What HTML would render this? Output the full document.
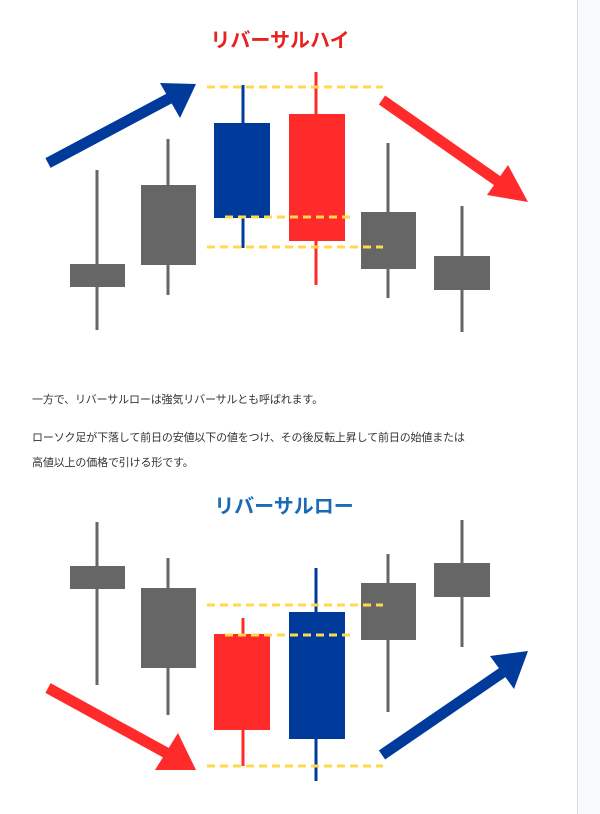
<!DOCTYPE html>
<html><head><meta charset="utf-8"><style>
body{margin:0;width:600px;height:814px;background:#fff;position:relative;overflow:hidden;font-family:"Liberation Sans","Noto Sans CJK JP",sans-serif}
.sb{position:absolute;left:577px;top:0;width:23px;height:814px;background:#f8f9fb;border-left:1px solid #ddd}
.t{position:absolute;left:32px;font-size:11px;letter-spacing:-0.15px;color:#333;white-space:nowrap}
svg{position:absolute;left:0;top:0}
</style></head><body>
<svg width="577" height="814" viewBox="0 0 577 814" font-family="Liberation Sans, Noto Sans CJK JP, sans-serif">
<text x="280" y="47" text-anchor="middle" font-size="20" font-weight="bold" fill="#e8231f">リバーサルハイ</text>
<g stroke="#666" stroke-width="3"><line x1="97" y1="170" x2="97" y2="330"/><line x1="168" y1="139" x2="168" y2="295"/><line x1="388" y1="143" x2="388" y2="298"/><line x1="462" y1="206" x2="462" y2="332"/></g>
<line x1="243" y1="85" x2="243" y2="248" stroke="#003a9b" stroke-width="3"/>
<line x1="316" y1="72" x2="316" y2="285" stroke="#ff2a2a" stroke-width="3"/>
<g fill="#666"><rect x="70" y="264" width="55" height="23"/><rect x="141" y="185" width="55" height="80"/><rect x="361" y="212" width="55" height="57"/><rect x="434" y="256" width="56" height="34"/></g>
<rect x="214" y="123" width="56" height="95" fill="#003a9b"/>
<rect x="289" y="114" width="56" height="127" fill="#ff2a2a"/>
<g stroke="#ffd84d" stroke-width="3" stroke-dasharray="8,5"><line x1="207" y1="87" x2="383" y2="87"/><line x1="225" y1="217" x2="355" y2="217"/><line x1="207" y1="247" x2="383" y2="247"/></g>
<line x1="48" y1="163" x2="172" y2="97" stroke="#003a9b" stroke-width="11"/>
<polygon points="160,83 196,84 180,118" fill="#003a9b"/>
<line x1="382" y1="100" x2="502" y2="184" stroke="#ff2a2a" stroke-width="11"/>
<polygon points="508,165 528,202 487,195" fill="#ff2a2a"/>

<text x="284" y="513" text-anchor="middle" font-size="20" font-weight="bold" fill="#1a6bb5">リバーサルロー</text>
<g stroke="#666" stroke-width="3"><line x1="97" y1="522" x2="97" y2="685"/><line x1="168" y1="558" x2="168" y2="715"/><line x1="388" y1="554" x2="388" y2="712"/><line x1="462" y1="520" x2="462" y2="647"/></g>
<line x1="243" y1="618" x2="243" y2="766" stroke="#ff2a2a" stroke-width="3"/>
<line x1="316" y1="568" x2="316" y2="781" stroke="#003a9b" stroke-width="3"/>
<g fill="#666"><rect x="70" y="566" width="55" height="23"/><rect x="141" y="588" width="55" height="80"/><rect x="361" y="583" width="55" height="57"/><rect x="434" y="563" width="56" height="34"/></g>
<rect x="214" y="634" width="56" height="96" fill="#ff2a2a"/>
<rect x="289" y="612" width="56" height="127" fill="#003a9b"/>
<g stroke="#ffd84d" stroke-width="3" stroke-dasharray="8,5"><line x1="207" y1="605" x2="383" y2="605"/><line x1="225" y1="635" x2="355" y2="635"/><line x1="207" y1="766" x2="383" y2="766"/></g>
<line x1="48" y1="688" x2="172" y2="756" stroke="#ff2a2a" stroke-width="11"/>
<polygon points="178,733 196,770 155,770" fill="#ff2a2a"/>
<line x1="382" y1="755" x2="506" y2="670" stroke="#003a9b" stroke-width="11"/>
<polygon points="490,656 528,651 514,689" fill="#003a9b"/>
</svg>
<div class="t" style="top:391px">一方で、リバーサルローは強気リバーサルとも呼ばれます。</div>
<div class="t" style="top:429px">ローソク足が下落して前日の安値以下の値をつけ、その後反転上昇して前日の始値または</div>
<div class="t" style="top:454px">高値以上の価格で引ける形です。</div>
<div class="sb"></div>
</body></html>
